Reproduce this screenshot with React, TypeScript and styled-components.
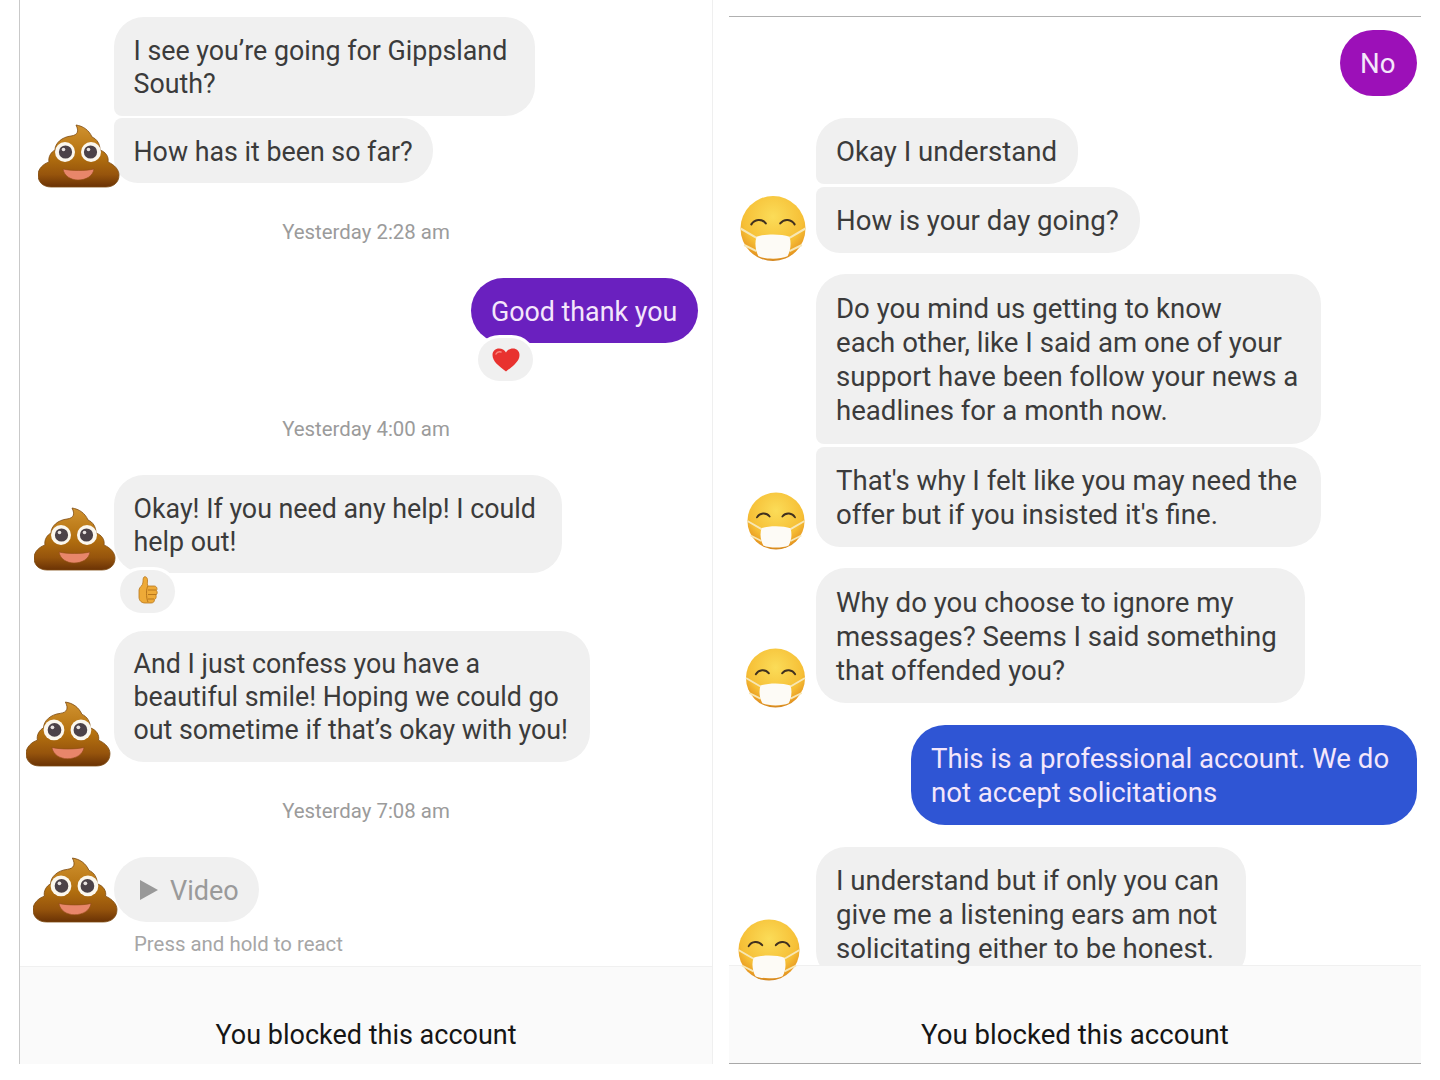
import React from "react";
import styled, { createGlobalStyle } from "styled-components";

const Global = createGlobalStyle`
  html, body { margin: 0; padding: 0; background: #fff; }
  body { font-family: Roboto, "Liberation Sans", sans-serif; }
`;

const Screen = styled.div`
  display: flex;
  width: 1440px;
  height: 1080px;
  overflow: hidden;
  background: #fff;
  align-items: flex-start;
`;

const LeftPanel = styled.section`
  display: flex;
  flex-direction: column;
  box-sizing: border-box;
  flex: none;
  margin-left: 19px;
  width: 694px;
  height: 1064px;
  border-left: 1px solid #c9c9c9;
  border-right: 1px solid #efefef;
`;

const RightPanel = styled.section`
  display: flex;
  flex-direction: column;
  box-sizing: border-box;
  flex: none;
  margin: 16px 0 0 16px;
  width: 692px;
  height: 1048px;
  border-top: 1px solid #b0b0b0;
  border-bottom: 1px solid #a8a8a8;
`;

const Thread = styled.div`
  flex: 1;
  min-height: 0;
  display: flex;
  flex-direction: column;
`;

const Row = styled.div<{ $top: number; $slot?: number }>`
  display: flex;
  flex: none;
  align-items: flex-end;
  margin-top: ${(p) => p.$top}px;
  padding-left: ${(p) => p.$slot ?? 0}px;
`;

const OutRow = styled.div<{ $top: number; $end: number }>`
  display: flex;
  flex: none;
  justify-content: flex-end;
  margin-top: ${(p) => p.$top}px;
  padding-right: ${(p) => p.$end}px;
`;

const AvatarSlot = styled.div<{ $slot: number; $x: number; $y: number }>`
  flex: none;
  position: relative;
  z-index: 3;
  display: flex;
  width: ${(p) => p.$slot - p.$x}px;
  margin-left: ${(p) => p.$x}px;
  margin-bottom: ${(p) => p.$y}px;
  svg { flex: none; }
`;

const Bubble = styled.div<{
  $w: number;
  $pad: string;
  $fs: number;
  $lh: number;
  $corners?: string;
}>`
  flex: none;
  box-sizing: border-box;
  width: ${(p) => p.$w}px;
  padding: ${(p) => p.$pad};
  background: #f0f0f0;
  color: #3b3b3b;
  font-size: ${(p) => p.$fs}px;
  line-height: ${(p) => p.$lh}px;
  white-space: nowrap;
  border-radius: ${(p) => p.$corners ?? "30px"};
`;

const OutBubble = styled.div<{
  $w: number;
  $pad: string;
  $fs: number;
  $lh: number;
  $bg: string;
}>`
  flex: none;
  box-sizing: border-box;
  width: ${(p) => p.$w}px;
  padding: ${(p) => p.$pad};
  background: ${(p) => p.$bg};
  color: #f4e6fb;
  font-size: ${(p) => p.$fs}px;
  line-height: ${(p) => p.$lh}px;
  white-space: nowrap;
  border-radius: 34px;
`;

const VideoBubble = styled.div`
  flex: none;
  box-sizing: border-box;
  display: flex;
  align-items: center;
  gap: 12px;
  width: 145px;
  height: 65px;
  padding: 2px 0 0 26px;
  background: #f0f0f0;
  color: #9a9a9a;
  font-size: 27px;
  border-radius: 33px;
  svg { margin-top: -2px; }
`;

const Stamp = styled.div<{ $top: number }>`
  flex: none;
  margin-top: ${(p) => p.$top}px;
  margin-bottom: ${(p) => 36 - p.$top}px;
  text-align: center;
  color: #9b9b9b;
  font-size: 20.4px;
  line-height: 24px;
`;

const Hint = styled.div`
  flex: none;
  margin: 10px 0 0 114px;
  color: #a6a6a6;
  font-size: 20.4px;
  line-height: 24px;
`;

const Reaction = styled.div<{ $x: number; $top: number; $drop: number }>`
  flex: none;
  position: relative;
  z-index: 2;
  box-sizing: border-box;
  display: flex;
  align-items: center;
  justify-content: center;
  align-self: flex-start;
  width: 55px;
  height: 43px;
  padding-bottom: ${(p) => p.$drop}px;
  margin-left: ${(p) => p.$x}px;
  margin-top: ${(p) => p.$top}px;
  background: #f0f0f0;
  border-radius: 22px;
  box-shadow: 0 0 0 3px #fff;
`;

const Footer = styled.footer<{ $fs: number; $bottom: number }>`
  flex: none;
  position: relative;
  z-index: 2;
  box-sizing: border-box;
  display: flex;
  align-items: flex-end;
  justify-content: center;
  height: 98px;
  padding-bottom: ${(p) => p.$bottom}px;
  background: #fafafa;
  border-top: 1px solid #f0f0f0;
  color: #151515;
  font-size: ${(p) => p.$fs}px;
  line-height: 34px;
`;

const Poop: React.FC<{ w: number; h: number }> = ({ w, h }) => {
  const id = React.useId();
  return (
    <svg width={w} height={h} viewBox="0 0 82 64" preserveAspectRatio="none">
      <defs>
        <linearGradient id={id} x1="0" y1="0" x2="0" y2="1">
          <stop offset="0" stopColor="#d0922f" />
          <stop offset="0.5" stopColor="#b3700f" />
          <stop offset="0.8" stopColor="#96540c" />
          <stop offset="1" stopColor="#6a3205" />
        </linearGradient>
      </defs>
      <path
        d="M38 1C45 2 51 6 54 13C59 15 62 20 62 26C68 28 71 33 70 38C77 41 81 46 81 51C81 59 75 63 68 63L13 63C5 63 0 58 0 51C0 45 5 40 11 38C10 33 13 28 17 26C17 19 24 13 33 12C40 11 41 7 38 1Z"
        fill={`url(#${id})`}
        stroke="#7d4a10"
        strokeWidth="0.8"
      />
      <circle cx="27" cy="28" r="10" fill="#fbf7ee" />
      <circle cx="53" cy="28" r="10" fill="#fbf7ee" />
      <circle cx="27.5" cy="28" r="6.6" fill="#4c4248" />
      <circle cx="52.5" cy="28" r="6.6" fill="#4c4248" />
      <circle cx="25.5" cy="25.5" r="1.8" fill="#e8e2e0" />
      <circle cx="50.5" cy="25.5" r="1.8" fill="#e8e2e0" />
      <path d="M25 45C33 47 48 47 56 45C55 52 48 56 40 56C33 56 26 52 25 45Z" fill="#e8866a" stroke="#8f4b16" strokeWidth="0.6" />
    </svg>
  );
};

const MaskFace: React.FC<{ w: number; h: number }> = ({ w, h }) => {
  const id = React.useId();
  return (
    <svg width={w} height={h} viewBox="0 0 64 64">
      <defs>
        <radialGradient id={id} cx="0.5" cy="0.32" r="0.72">
          <stop offset="0" stopColor="#fbdc58" />
          <stop offset="0.65" stopColor="#f6bf36" />
          <stop offset="0.88" stopColor="#e89a22" />
          <stop offset="1" stopColor="#b9701f" />
        </radialGradient>
      </defs>
      <circle cx="32" cy="32" r="31.5" fill={`url(#${id})`} />
      <path d="M11 28C14 23 21 22 25 27" fill="none" stroke="#40301f" strokeWidth="2" strokeLinecap="round" />
      <path d="M39 27C43 22 50 23 53 28" fill="none" stroke="#40301f" strokeWidth="2" strokeLinecap="round" />
      <path d="M0.5 32L16 41M63.5 32L48 41M4 48L16 54M60 48L48 54" stroke="#f7e7b5" strokeWidth="2" fill="none" />
      <path d="M16 40C24 37 40 37 48 40C50 46 49 54 46 59C39 62 25 62 18 59C15 54 14 46 16 40Z" fill="#fdfbf6" />
    </svg>
  );
};

const Heart = () => (
  <svg width="28" height="24" viewBox="0 0 28 24">
    <path d="M14 23.5C7 18 0.5 13.5 0.5 7C0.5 3 3.5 0.5 7 0.5C10 0.5 12.5 2 14 4.5C15.5 2 18 0.5 21 0.5C24.5 0.5 27.5 3 27.5 7C27.5 13.5 21 18 14 23.5Z" fill="#e8322f" />
    <path d="M4 6C5 4 7 3.5 9 4" stroke="#f98a80" strokeWidth="1.4" fill="none" strokeLinecap="round" />
  </svg>
);

const Thumb = () => (
  <svg width="20" height="28" viewBox="0 0 20 28">
    <path d="M6 1C8 0 9.5 2 9.5 4C9.5 7 9 9 10 10L16 10C19 10 19.5 13 18.5 14.5C19.5 16 19.5 18 18 19C18.5 21 18 23 16.5 23.5C16.5 26 15 27 13 27L7 27C4 27 1 25 1 21L1 14C1 11 5 10 5 6C5 4 5 2 6 1Z" fill="#eeaa38" stroke="#b8761c" strokeWidth="0.8" />
    <path d="M10 14L18 14M10 18.5L18 18.5M10 23L16 23M10 10C8 12 8 22 10 26" stroke="#b8761c" strokeWidth="1" fill="none" />
  </svg>
);

const Play = () => (
  <svg width="18" height="20" viewBox="0 0 18 20">
    <path d="M0 0L18 10L0 20Z" fill="#999" />
  </svg>
);

const ONE = "8px 32px 32px 24px";
const FIRST = "30px 30px 30px 8px";

const L = { $fs: 26.8, $lh: 33, $pad: "18px 20px 14px 19.5px" };
const R = { $fs: 27.6, $lh: 34, $pad: "17px 20px 15px" };
const R_TALL = { $fs: 27.6, $lh: 34, $pad: "18px 20px 16px" };
const R_MID = { $fs: 27.6, $lh: 34, $pad: "18px 20px 15px" };

export default function App() {
  return (
    <Screen>
      <Global />
      <LeftPanel>
        <Thread>
          <Row $top={17} $slot={94}>
            <Bubble $w={421} {...L} $pad="18px 20px 15px 19.5px" $corners={FIRST}>
              I see you’re going for Gippsland
              <br />
              South?
            </Bubble>
          </Row>
          <Row $top={2}>
            <AvatarSlot $slot={94} $x={18} $y={-5}>
              <Poop w={82} h={64} />
            </AvatarSlot>
            <Bubble $w={319} {...L} $corners={ONE}>
              How has it been so far?
            </Bubble>
          </Row>
          <Stamp $top={37}>Yesterday 2:28 am</Stamp>
          <OutRow $top={35} $end={14}>
            <OutBubble $w={227} {...L} $pad="18px 20px 14px" $bg="#6a20bf">
              Good thank you
            </OutBubble>
          </OutRow>
          <Reaction $x={458} $top={-5} $drop={0}>
            <Heart />
          </Reaction>
          <Stamp $top={36}>Yesterday 4:00 am</Stamp>
          <Row $top={34}>
            <AvatarSlot $slot={94} $x={14} $y={2}>
              <Poop w={82} h={64} />
            </AvatarSlot>
            <Bubble $w={448} {...L}>
              Okay! If you need any help! I could
              <br />
              help out!
            </Bubble>
          </Row>
          <Reaction $x={100} $top={-3} $drop={4}>
            <Thumb />
          </Reaction>
          <Row $top={18}>
            <AvatarSlot $slot={94} $x={6} $y={-5}>
              <Poop w={85} h={66} />
            </AvatarSlot>
            <Bubble $w={476} {...L} $pad="17px 20px 15px 19.5px">
              And I just confess you have a
              <br />
              beautiful smile! Hoping we could go
              <br />
              out sometime if that’s okay with you!
            </Bubble>
          </Row>
          <Stamp $top={37}>Yesterday 7:08 am</Stamp>
          <Row $top={35}>
            <AvatarSlot $slot={94} $x={13} $y={-1}>
              <Poop w={85} h={66} />
            </AvatarSlot>
            <VideoBubble>
              <Play />
              Video
            </VideoBubble>
          </Row>
          <Hint>Press and hold to react</Hint>
        </Thread>
        <Footer $fs={27} $bottom={12}>You blocked this account</Footer>
      </LeftPanel>
      <RightPanel>
        <Thread>
          <OutRow $top={13} $end={4}>
            <OutBubble $w={77} {...R} $bg="#9c10b8">
              No
            </OutBubble>
          </OutRow>
          <Row $top={22} $slot={87}>
            <Bubble $w={262} {...R} $corners={FIRST}>
              Okay I understand
            </Bubble>
          </Row>
          <Row $top={3}>
            <AvatarSlot $slot={87} $x={11} $y={-9}>
              <MaskFace w={66} h={67} />
            </AvatarSlot>
            <Bubble $w={324} {...R} $corners={ONE}>
              How is your day going?
            </Bubble>
          </Row>
          <Row $top={21} $slot={87}>
            <Bubble $w={505} {...R_TALL} $corners={FIRST}>
              Do you mind us getting to know
              <br />
              each other, like I said am one of your
              <br />
              support have been follow your news a
              <br />
              headlines for a month now.
            </Bubble>
          </Row>
          <Row $top={3}>
            <AvatarSlot $slot={87} $x={18} $y={-3}>
              <MaskFace w={58} h={58} />
            </AvatarSlot>
            <Bubble $w={505} {...R} $corners={ONE}>
              That's why I felt like you may need the
              <br />
              offer but if you insisted it's fine.
            </Bubble>
          </Row>
          <Row $top={21}>
            <AvatarSlot $slot={87} $x={16} $y={-5}>
              <MaskFace w={61} h={60} />
            </AvatarSlot>
            <Bubble $w={489} {...R_MID}>
              Why do you choose to ignore my
              <br />
              messages? Seems I said something
              <br />
              that offended you?
            </Bubble>
          </Row>
          <OutRow $top={22} $end={4}>
            <OutBubble $w={506} {...R} $bg="#2f55d4">
              This is a professional account. We do
              <br />
              not accept solicitations
            </OutBubble>
          </OutRow>
          <Row $top={22}>
            <AvatarSlot $slot={87} $x={9} $y={0}>
              <MaskFace w={62} h={62} />
            </AvatarSlot>
            <Bubble $w={430} {...R}>
              I understand but if only you can
              <br />
              give me a listening ears am not
              <br />
              solicitating either to be honest.
            </Bubble>
          </Row>
        </Thread>
        <Footer $fs={27.6} $bottom={11}>You blocked this account</Footer>
      </RightPanel>
    </Screen>
  );
}
